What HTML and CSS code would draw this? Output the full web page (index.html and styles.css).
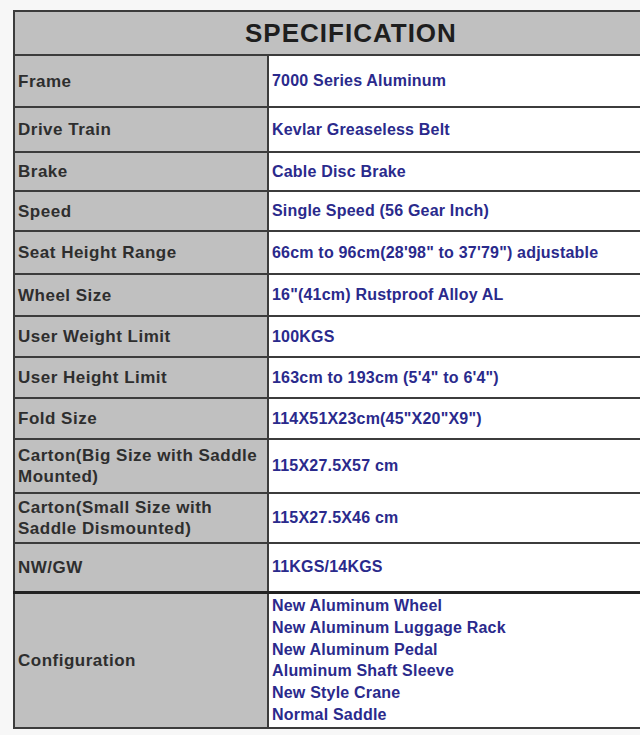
FILE: index.html
```html
<!DOCTYPE html>
<html>
<head>
<meta charset="utf-8">
<link rel="stylesheet" href="styles.css">
</head>
<body>
<table class="spec">
  <colgroup><col class="c-label"><col class="c-value"></colgroup>
  <tr class="r-head"><th colspan="2">SPECIFICATION</th></tr>
  <tr class="r52"><td class="lbl">Frame</td><td class="val">7000 Series Aluminum</td></tr>
  <tr class="r45"><td class="lbl">Drive Train</td><td class="val">Kevlar Greaseless Belt</td></tr>
  <tr class="r39"><td class="lbl">Brake</td><td class="val">Cable Disc Brake</td></tr>
  <tr class="r40"><td class="lbl">Speed</td><td class="val">Single Speed (56 Gear Inch)</td></tr>
  <tr class="r43"><td class="lbl">Seat Height Range</td><td class="val">66cm to 96cm(28'98" to 37'79") adjustable</td></tr>
  <tr class="r42"><td class="lbl">Wheel Size</td><td class="val">16"(41cm) Rustproof Alloy AL</td></tr>
  <tr class="r41"><td class="lbl">User Weight Limit</td><td class="val">100KGS</td></tr>
  <tr class="r41"><td class="lbl">User Height Limit</td><td class="val">163cm to 193cm (5'4" to 6'4")</td></tr>
  <tr class="r41"><td class="lbl">Fold Size</td><td class="val">114X51X23cm(45"X20"X9")</td></tr>
  <tr class="r54"><td class="lbl">Carton(Big Size with Saddle Mounted)</td><td class="val">115X27.5X57 cm</td></tr>
  <tr class="r50"><td class="lbl">Carton(Small Size with Saddle Dismounted)</td><td class="val">115X27.5X46 cm</td></tr>
  <tr class="r49 thick"><td class="lbl">NW/GW</td><td class="val">11KGS/14KGS</td></tr>
  <tr class="r136"><td class="lbl">Configuration</td><td class="val list">New Aluminum Wheel<br>New Aluminum Luggage Rack<br>New Aluminum Pedal<br>Aluminum Shaft Sleeve<br>New Style Crane<br>Normal Saddle</td></tr>
</table>
</body>
</html>
```
FILE: styles.css
```css
html, body {
  margin: 0;
  padding: 0;
  background: #f7f7f7;
}
body {
  padding: 10px 0 0 13px;
  overflow: hidden;
}
.spec {
  border-collapse: collapse;
  table-layout: fixed;
  width: 660px;
  font-family: "Liberation Sans", Arial, sans-serif;
}
.c-label { width: 254px; }
.spec th, .spec td {
  border: 2px solid #3c3c3c;
  padding: 0 0 0 3px;
  vertical-align: middle;
}
.spec th {
  background: #c0c0c0;
  color: #1e1e1e;
  font-size: 26px;
  font-weight: bold;
  letter-spacing: 1px;
  text-align: left;
  padding-left: 230px;
  height: 42px;
}
.lbl {
  background: #c0c0c0;
  color: #2e2e2e;
  font-size: 17px;
  font-weight: bold;
  line-height: 21px;
  letter-spacing: 0.5px;
  padding-right: 2px;
}
.val {
  background: #ffffff;
  color: #2a2a8c;
  font-size: 16px;
  font-weight: bold;
  letter-spacing: 0.2px;
  padding-left: 4px;
  line-height: 21.7px;
}
.list { padding-top: 1px; }
.thick td { border-bottom: 3px solid #222; }
.r39 { height: 39px; }
.r40 { height: 40px; }
.r41 { height: 41px; }
.r42 { height: 42px; }
.r43 { height: 43px; }
.r45 { height: 45px; }
.r49 { height: 49px; }
.r50 { height: 50px; }
.r52 { height: 52px; }
.r54 { height: 54px; }
.r136 { height: 136px; }
```
